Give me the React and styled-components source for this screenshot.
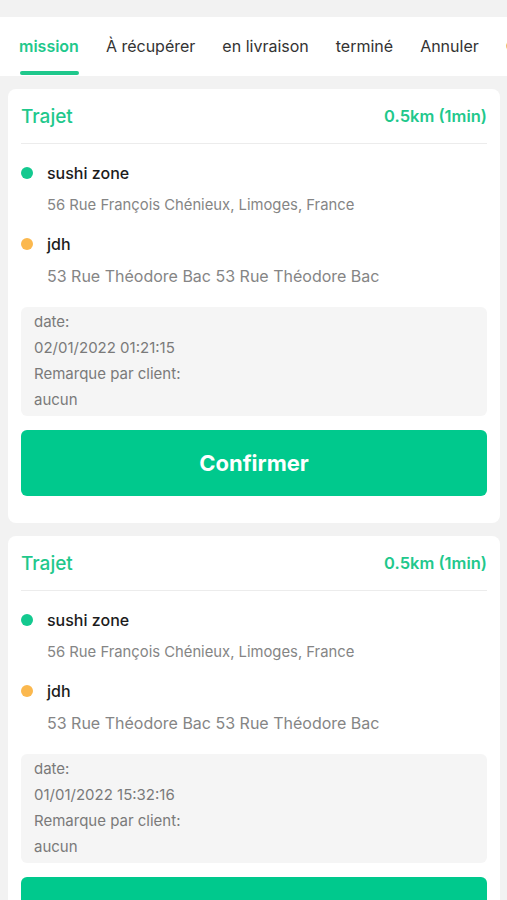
import React from 'react';
import styled, {createGlobalStyle} from 'styled-components';

const GlobalStyle = createGlobalStyle`
  html, body {
    margin: 0;
    padding: 0;
    background: #f2f2f2;
    font-family: Inter, "Noto Sans", sans-serif;
  }
`;

const Page = styled.div`
  width: 507px;
  height: 900px;
  overflow: hidden;
  padding-top: 17px;
  box-sizing: border-box;
  background: #f2f2f2;
`;

const TabBar = styled.div`
  display: flex;
  gap: 27px;
  height: 59px;
  padding: 0 0 0 19px;
  background: #fff;
  overflow: hidden;
  white-space: nowrap;
`;

const Tab = styled.div`
  position: relative;
  display: flex;
  align-items: center;
  padding-bottom: 1px;
  font-size: 16px;
  font-weight: ${p => (p.active ? 600 : 400)};
  color: ${p => (p.active ? '#1fc88c' : '#333')};

  &::after {
    content: '';
    display: ${p => (p.active ? 'block' : 'none')};
    position: absolute;
    left: 1px;
    right: 0;
    bottom: 1px;
    height: 4px;
    border-radius: 2px;
    background: #1fc88c;
  }
`;

const List = styled.div`
  display: flex;
  flex-direction: column;
  gap: 13px;
  padding: 13px 7px 0 8px;
`;

const Card = styled.div`
  background: #fff;
  border-radius: 8px;
  padding: 0 13px 27px 13px;
`;

const Header = styled.div`
  display: flex;
  align-items: center;
  justify-content: space-between;
  height: 54px;
  border-bottom: 1.5px solid #ececec;
`;

const Title = styled.div`
  font-size: 19px;
  font-weight: 500;
  color: #1fc88c;
`;

const Distance = styled.div`
  font-size: 16.5px;
  font-weight: 600;
  color: #1fc88c;
`;

const Stops = styled.div`
  padding-top: 14px;
`;

const StopName = styled.div`
  display: flex;
  align-items: center;
  height: 30px;
  font-size: 16px;
  font-weight: 500;
  color: #1c1c1c;

  &::before {
    content: '';
    width: 12px;
    height: 12px;
    border-radius: 50%;
    margin: 0 14px 0 0;
    background: ${p => p.dot};
  }
`;

const Address = styled.div`
  padding-left: 26px;
  height: 41px;
  line-height: 34px;
  font-size: ${p => p.size || 14.8}px;
  color: #858585;
`;

const InfoBox = styled.div`
  margin-top: 7px;
  background: #f5f5f5;
  border-radius: 6px;
  padding: 2px 13px 3px;
  font-size: 15px;
  line-height: 26px;
  color: #7a7a7a;
`;

const Button = styled.button`
  display: block;
  width: 100%;
  height: 66px;
  margin-top: 14px;
  border: none;
  border-radius: 6px;
  background: #00c98d;
  color: #fff;
  font-family: inherit;
  font-size: 22px;
  font-weight: 700;
`;

const tabs = ['mission', 'À récupérer', 'en livraison', 'terminé', 'Annuler', 'Compte'];

const orders = [
  {date: '02/01/2022 01:21:15'},
  {date: '01/01/2022 15:32:16'},
];

function OrderCard({order}) {
  return (
    <Card>
      <Header>
        <Title>Trajet</Title>
        <Distance>0.5km (1min)</Distance>
      </Header>
      <Stops>
        <StopName dot="#13c98f">sushi zone</StopName>
        <Address>56 Rue François Chénieux, Limoges, France</Address>
        <StopName dot="#fbb84e">jdh</StopName>
        <Address size={16}>53 Rue Théodore Bac 53 Rue Théodore Bac</Address>
      </Stops>
      <InfoBox>
        <div>date:</div>
        <div>{order.date}</div>
        <div>Remarque par client:</div>
        <div>aucun</div>
      </InfoBox>
      <Button>Confirmer</Button>
    </Card>
  );
}

export default function App() {
  return (
    <Page>
      <GlobalStyle/>
      <TabBar>
        {tabs.map((t, i) => (
          <Tab key={t} active={i === 0}>{t}</Tab>
        ))}
      </TabBar>
      <List>
        {orders.map((o, i) => (
          <OrderCard key={i} order={o}/>
        ))}
      </List>
    </Page>
  );
}
